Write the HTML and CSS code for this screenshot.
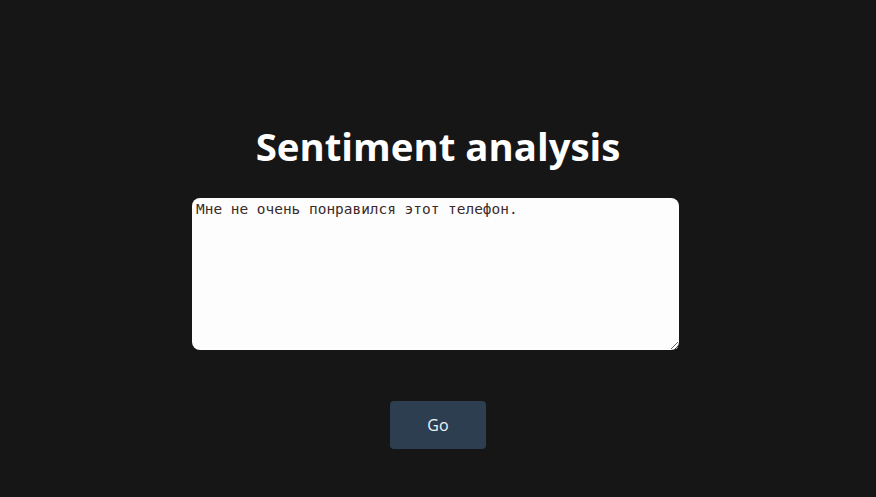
FILE: index.html
```html
<!DOCTYPE html>
<html>
<head>
<meta charset="utf-8">
<link rel="stylesheet" href="styles.css">
</head>
<body>
<main class="page">
  <h1 class="title">Sentiment analysis</h1>
  <textarea class="input">Мне не очень понравился этот телефон.</textarea>
  <button class="go">Go</button>
</main>
</body>
</html>
```
FILE: styles.css
```css
html, body {
  margin: 0;
  padding: 0;
  background: #161616;
  height: 100%;
}
.page {
  display: flex;
  flex-direction: column;
  align-items: center;
  padding-top: 120px;
  font-family: "Open Sans", sans-serif;
}
.title {
  margin: 0;
  color: #ffffff;
  font-size: 38.4px;
  font-weight: 700;
  line-height: 52px;
}
.input {
  margin-top: 26px;
  margin-right: 5px;
  width: 487px;
  height: 152px;
  box-sizing: border-box;
  border: none;
  border-radius: 8px;
  background: #fdfdfd;
  color: #3a2a2a;
  font-family: "DejaVu Sans Mono", monospace;
  font-size: 14.45px;
  line-height: 17px;
  padding: 3px 4px;
  resize: both;
  outline: none;
}
.go {
  margin-top: 51px;
  width: 96px;
  height: 48px;
  border: none;
  border-radius: 4px;
  background: #2c3e50;
  color: #eef4fb;
  font-family: "Open Sans", sans-serif;
  font-size: 16px;
}
```
